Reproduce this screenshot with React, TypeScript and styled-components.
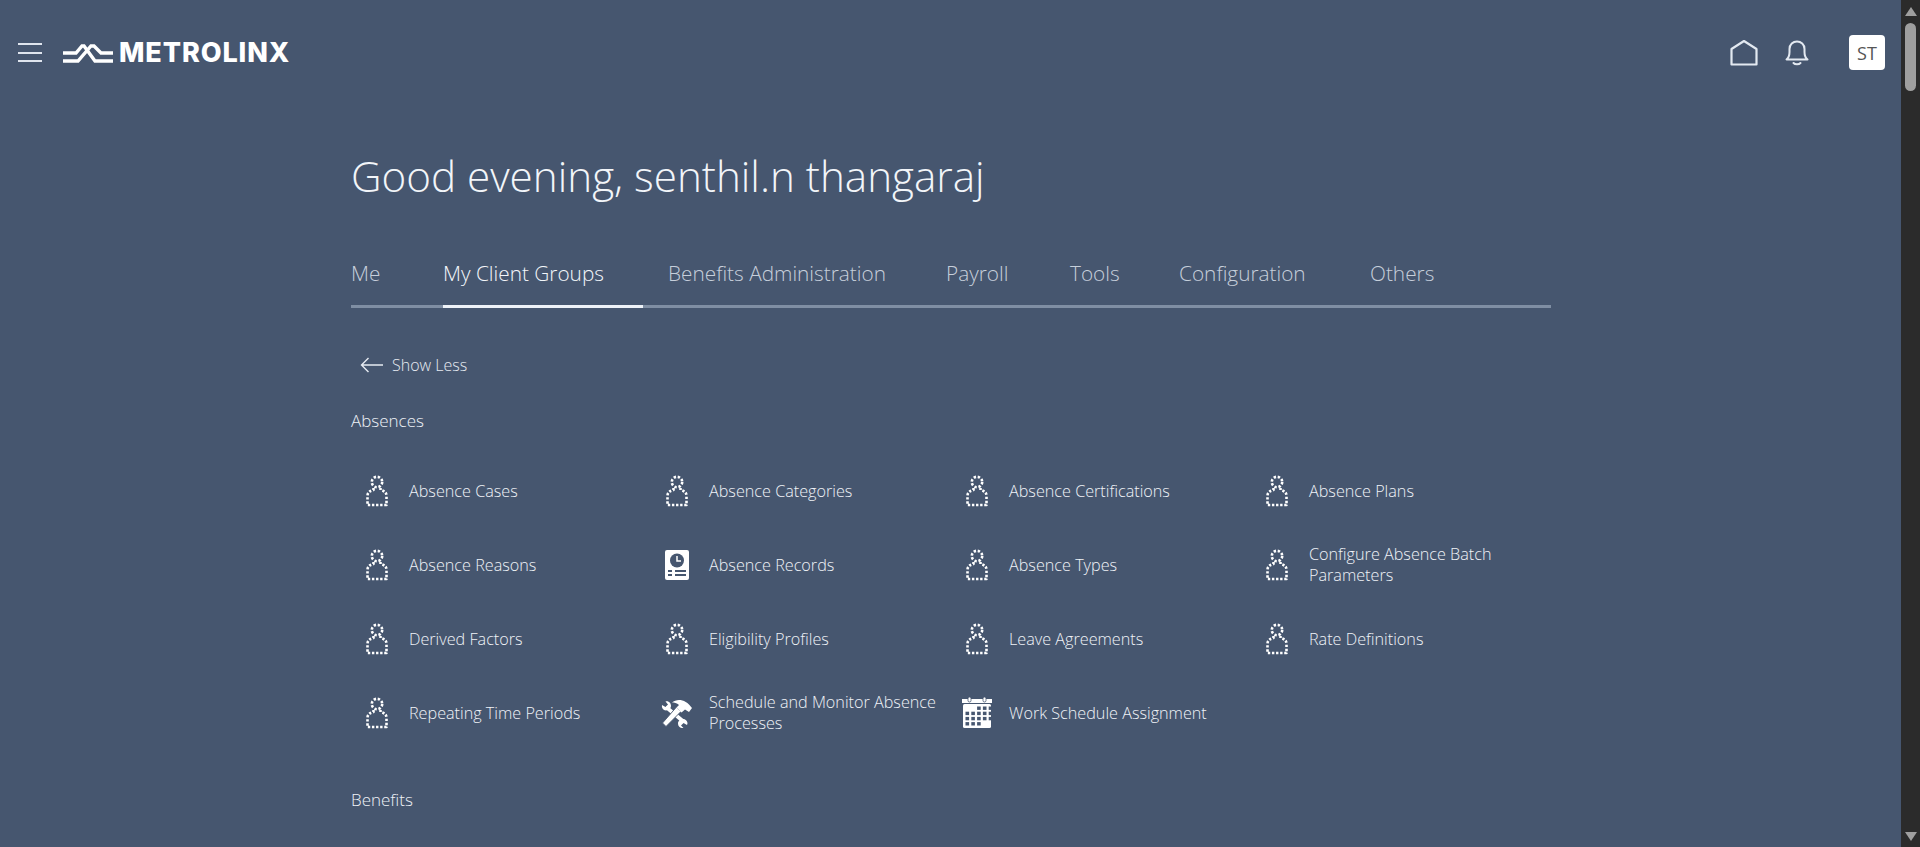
import React from "react";
import styled, { createGlobalStyle } from "styled-components";

const Global = createGlobalStyle`
  html, body { margin: 0; padding: 0; height: 100%; overflow: hidden; }
  body { font-family: "Open Sans", "Noto Sans", "Liberation Sans", sans-serif; font-weight: 300; background: #46566f; }
`;

const Page = styled.div`
  display: flex;
  width: 1920px;
  height: 847px;
  overflow: hidden;
  background: #46566f;
`;
const Main = styled.div`
  flex: 1;
  min-width: 0;
  display: flex;
  flex-direction: column;
`;
const Header = styled.header`
  height: 105px;
  flex: none;
  display: flex;
  align-items: center;
  padding: 0 16px 0 18px;
`;
const MenuButton = styled.div`
  display: flex;
  flex-direction: column;
  gap: 6.5px;
  width: 24px;
  margin-right: 20px;
  span { height: 2px; background: #dfe5ee; display: block; }
`;
const LogoText = styled.span`
  font-family: Inter, "Liberation Sans", sans-serif;
  font-weight: 800;
  font-size: 27px;
  letter-spacing: 0.9px;
  color: #fff;
  margin-left: 5px;
  line-height: 1;
`;
const Spacer = styled.div`
  flex: 1;
`;
const IconSlot = styled.div<{ $mr: number }>`
  display: flex;
  margin-right: ${(p) => p.$mr}px;
`;
const Avatar = styled.div`
  width: 36px;
  height: 35px;
  border-radius: 4px;
  background: #fff;
  color: #555;
  font-family: "Open Sans", sans-serif;
  font-weight: 400;
  font-size: 18px;
  display: flex;
  align-items: center;
  justify-content: center;
`;
const Content = styled.main`
  width: 1200px;
  margin-left: 351px;
`;
const Greeting = styled.h1`
  margin: 41px 0 0;
  font-size: 42.2px;
  line-height: 60px;
  font-weight: 300;
  color: #f2f5f9;
`;
const Tabs = styled.nav`
  display: flex;
  margin-top: 43px;
  height: 56px;
  border-bottom: 3px solid #7f8ea3;
`;
const Tab = styled.div<{ $active?: boolean; $w: number }>`
  width: ${(p) => p.$w}px;
  flex: none;
  font-size: 20.8px;
  line-height: 30px;
  padding-top: 9px;
  box-sizing: border-box;
  margin-right: 25px;
  margin-bottom: -3px;
  white-space: nowrap;
  color: ${(p) => (p.$active ? "#f4f7fb" : "#c6cfdb")};
  border-bottom: 3px solid ${(p) => (p.$active ? "#eef2f8" : "transparent")};
`;
const ShowLess = styled.div`
  display: flex;
  align-items: center;
  gap: 8px;
  margin: 45px 0 0 9px;
  height: 24px;
  font-size: 16px;
  color: #e6ebf2;
`;
const SectionTitle = styled.h2`
  margin: 0;
  font-size: 17px;
  line-height: 24px;
  font-weight: 300;
  color: #eef2f7;
`;
const AbsTitle = styled(SectionTitle)`
  margin-top: 32px;
`;
const Grid = styled.div`
  display: grid;
  grid-template-columns: repeat(4, 300px);
  grid-auto-rows: 74px;
  margin-top: 21px;
`;
const Item = styled.div`
  display: flex;
  align-items: center;
  padding-left: 8px;
`;
const ItemIcon = styled.div`
  width: 36px;
  height: 36px;
  flex: none;
  display: flex;
  align-items: center;
  justify-content: center;
  margin-right: 14px;
`;
const ItemLabel = styled.span`
  font-size: 16.2px;
  line-height: 21px;
  color: #f0f3f8;
  max-width: 236px;
`;
const BenTitle = styled(SectionTitle)`
  margin-top: 38px;
`;
const Scrollbar = styled.aside`
  flex: none;
  width: 19px;
  height: 847px;
  background: #2b2b2b;
  display: flex;
  flex-direction: column;
  align-items: center;
  padding-top: 7px;
  box-sizing: border-box;
`;
const Arrow = styled.div<{ $down?: boolean }>`
  width: 0;
  height: 0;
  border-left: 6px solid transparent;
  border-right: 6px solid transparent;
  ${(p) => (p.$down ? "border-top: 9px solid #9f9f9f;" : "border-bottom: 9px solid #9f9f9f;")}
`;
const Thumb = styled.div`
  width: 11px;
  height: 68px;
  border-radius: 6px;
  background: #9f9f9f;
  margin-top: 7px;
  margin-bottom: auto;
`;
const ArrowWrap = styled.div`
  margin-bottom: 6px;
`;

const Logo = () => (
  <svg width="52" height="20" viewBox="0 0 52 20" fill="none" stroke="#fff" strokeWidth="3.4">
    <path d="M1 10 H14 L20 3 H22 L33 18 H51" />
    <path d="M1 18 H16 L29 3 H32 L39 10 H51" />
  </svg>
);
const Home = () => (
  <svg width="28" height="27" viewBox="0 0 28 27" fill="none" stroke="#e3e9f1" strokeWidth="2.2">
    <path d="M1.5 25.5 V10 L14 2 L26.5 10 V25.5 Z" strokeLinejoin="round" />
  </svg>
);
const Bell = () => (
  <svg width="24" height="26" viewBox="0 0 24 26" fill="none" stroke="#e3e9f1" strokeWidth="2">
    <path d="M1.5 19.5 H22.5 C20 17.5 19.5 15.5 19.5 12 V9 C19.5 4.5 16 1.5 12 1.5 C8 1.5 4.5 4.5 4.5 9 V12 C4.5 15.5 4 17.5 1.5 19.5 Z" strokeLinejoin="round" />
    <path d="M8.5 23 C10 24.6 14 24.6 15.5 23" strokeLinecap="round" />
  </svg>
);
const BackArrow = () => (
  <svg width="24" height="16" viewBox="0 0 24 16" fill="none" stroke="#e6ebf2" strokeWidth="1.4">
    <path d="M23 8 H1.5 M8.5 1 L1.5 8 L8.5 15" />
  </svg>
);
const Person = () => (
  <svg width="22" height="32" viewBox="0 0 22 32" fill="none" stroke="#fff" strokeWidth="2.6" strokeDasharray="2.4 1.7">
    <circle cx="11" cy="7" r="5.2" />
    <path d="M7.5 13 V15 C3.5 16 1.5 17.5 1.5 21 V30 H20.5 V21 C20.5 17.5 18.5 16 14.5 15 V13" strokeLinejoin="round" />
  </svg>
);
const Records = () => (
  <svg width="24" height="30" viewBox="0 0 24 30">
    <rect width="24" height="30" rx="2" fill="#fff" />
    <circle cx="12" cy="10.5" r="7" fill="#46566f" />
    <path d="M12 6 V11 H16" fill="none" stroke="#fff" strokeWidth="1.5" />
    <path d="M3 21 H7 M10 21 H21 M3 25 H7 M10 25 H21" stroke="#46566f" strokeWidth="1.8" />
  </svg>
);
const Tools = () => (
  <svg width="34" height="30" viewBox="20 12 34 30">
    <path d="M26 21 L44 36" stroke="#fff" strokeWidth="3.6" fill="none" />
    <path d="M22 19 L25.5 21 L28 18.5 L25.5 15.5 C28.5 14.5 31 17 31 20 C31 23 27 25.5 24 24 C22.5 23 21.5 21 22 19 Z" fill="#fff" />
    <path d="M47 39 L43.5 37 L41 39.5 L43.5 42 C40.5 42.5 38 40.5 38 37.5 C38 34 42 32 45 33.5 C47.5 35 48 37 47 39 Z" fill="#fff" />
    <path d="M36.5 21 L41 25.5 L26 40.5 L22.5 37 Z" fill="#fff" stroke="#46566f" strokeWidth="0.9" />
    <path d="M32 16.5 C37 12 46 13 52 22 L49 26 L45 23.5 L41.5 26.5 L36.5 21.5 L39 19 C37 17 34 16.5 32 16.5 Z" fill="#fff" />
  </svg>
);
const Calendar = () => {
  const cells: React.ReactElement[] = [];
  for (let r = 0; r < 4; r++) {
    for (let c = 0; c < 5; c++) {
      if ((r === 0 && c < 2) || (r === 3 && c > 2)) continue;
      cells.push(<rect key={`${r}-${c}`} x={3.5 + c * 5.8} y={9.5 + r * 5.2} width="3.6" height="3.4" fill="#46566f" />);
    }
  }
  return (
    <svg width="30" height="32" viewBox="0 0 30 32">
      <rect x="0" y="2" width="30" height="4" fill="#fff" />
      <rect x="1" y="7" width="28" height="24" rx="1.5" fill="#fff" />
      <rect x="6" y="0" width="3" height="5" rx="1.5" fill="#fff" stroke="#46566f" strokeWidth="0.8" />
      <rect x="21" y="0" width="3" height="5" rx="1.5" fill="#fff" stroke="#46566f" strokeWidth="0.8" />
      {cells}
    </svg>
  );
};

const tabs = [
  { label: "Me", w: 67 },
  { label: "My Client Groups", w: 200 },
  { label: "Benefits Administration", w: 253 },
  { label: "Payroll", w: 99 },
  { label: "Tools", w: 84 },
  { label: "Configuration", w: 166 },
  { label: "Others", w: 100 },
];
const items: { label: string; icon: React.ReactElement }[] = [
  { label: "Absence Cases", icon: <Person /> },
  { label: "Absence Categories", icon: <Person /> },
  { label: "Absence Certifications", icon: <Person /> },
  { label: "Absence Plans", icon: <Person /> },
  { label: "Absence Reasons", icon: <Person /> },
  { label: "Absence Records", icon: <Records /> },
  { label: "Absence Types", icon: <Person /> },
  { label: "Configure Absence Batch Parameters", icon: <Person /> },
  { label: "Derived Factors", icon: <Person /> },
  { label: "Eligibility Profiles", icon: <Person /> },
  { label: "Leave Agreements", icon: <Person /> },
  { label: "Rate Definitions", icon: <Person /> },
  { label: "Repeating Time Periods", icon: <Person /> },
  { label: "Schedule and Monitor Absence Processes", icon: <Tools /> },
  { label: "Work Schedule Assignment", icon: <Calendar /> },
];

export default function App() {
  return (
    <Page>
      <Global />
      <Main>
        <Header>
          <MenuButton>
            <span />
            <span />
            <span />
          </MenuButton>
          <Logo />
          <LogoText>METROLINX</LogoText>
          <Spacer />
          <IconSlot $mr={27}>
            <Home />
          </IconSlot>
          <IconSlot $mr={40}>
            <Bell />
          </IconSlot>
          <Avatar>ST</Avatar>
        </Header>
        <Content>
          <Greeting>Good evening, senthil.n thangaraj</Greeting>
          <Tabs>
            {tabs.map((t) => (
              <Tab key={t.label} $w={t.w} $active={t.label === "My Client Groups"}>
                {t.label}
              </Tab>
            ))}
          </Tabs>
          <ShowLess>
            <BackArrow />
            Show Less
          </ShowLess>
          <AbsTitle>Absences</AbsTitle>
          <Grid>
            {items.map((i) => (
              <Item key={i.label}>
                <ItemIcon>{i.icon}</ItemIcon>
                <ItemLabel>{i.label}</ItemLabel>
              </Item>
            ))}
          </Grid>
          <BenTitle>Benefits</BenTitle>
        </Content>
      </Main>
      <Scrollbar>
        <Arrow />
        <Thumb />
        <ArrowWrap>
          <Arrow $down />
        </ArrowWrap>
      </Scrollbar>
    </Page>
  );
}
